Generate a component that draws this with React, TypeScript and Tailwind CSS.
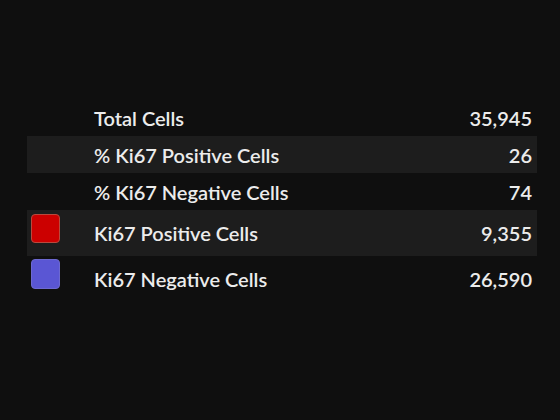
const ROWS = [
  { label: "Total Cells", value: "35,945", h: "h-[36px]" },
  { label: "% Ki67 Positive Cells", value: "26", h: "h-[37px]" },
  { label: "% Ki67 Negative Cells", value: "74", h: "h-[37px]" },
  { label: "Ki67 Positive Cells", value: "9,355", h: "h-[46px]", swatch: "red" },
  { label: "Ki67 Negative Cells", value: "26,590", h: "h-[46px]", swatch: "blue" },
];

function Swatch({ color }: { color?: string }) {
  if (color === "red")
    return <div className="mt-[4px] h-[29px] w-[29px] rounded-[4px] border border-[#b84a3e] bg-[#cc0000]" />;
  if (color === "blue")
    return <div className="mt-[3px] h-[30px] w-[29px] rounded-[4px] border border-[#6d69d0] bg-[#5a56d4]" />;
  return null;
}

export default function App() {
  return (
    <div className="h-[420px] w-[560px] bg-[#0f0f0f] pt-[100px] pl-[27px] font-['Lato',sans-serif] text-[#ececec]">
      <div className="w-[510px]">
        {ROWS.map((row, i) => (
          <div
            key={row.label}
            className={`flex items-center ${row.h} ${i % 2 === 1 ? "bg-[#1d1d1d]" : ""}`}
          >
            <div className="flex h-full w-[67px] shrink-0 items-start pl-[4px]">
              <Swatch color={row.swatch} />
            </div>
            <div className="flex-1 text-[20px] font-semibold">{row.label}</div>
            <div className="pr-[5px] text-[20px] font-semibold">{row.value}</div>
          </div>
        ))}
      </div>
    </div>
  );
}
